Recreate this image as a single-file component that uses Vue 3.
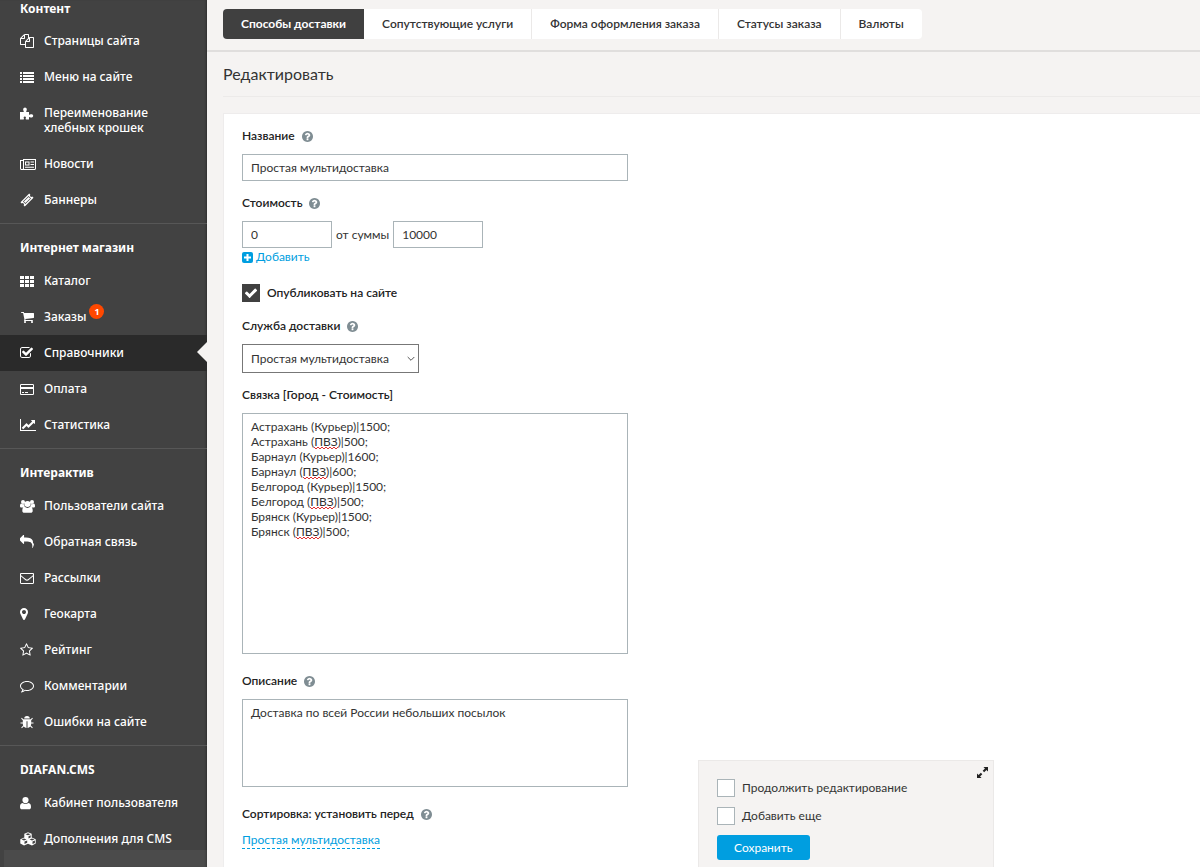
<script setup>
import { ref, computed, onMounted } from 'vue'

const check = 'M1671 566q0 40-28 68l-724 724-136 136q-28 28-68 28t-68-28l-136-136-362-362q-28-28-28-68t28-68l136-136q28-28 68-28t68 28l294 295 656-657q28-28 68-28t68 28l136 136q28 28 28 68z'
const help = 'M1024 1376v-192q0-14-9-23t-23-9h-192q-14 0-23 9t-9 23v192q0 14 9 23t23 9h192q14 0 23-9t9-23zm256-672q0-88-55.5-163t-138.5-116-170-41q-243 0-371 213-15 24 8 42l132 100q7 6 19 6 16 0 25-12 53-68 86-92 34-24 86-24 48 0 85.500 26t37.500 59q0 38-20 61t-68 45q-63 28-115.500 86.500t-52.500 125.500v36q0 14 9 23t23 9h192q14 0 23-9t9-23q0-19 21.500-49.500t54.500-49.500q32-18 49-28.500t46-35 44.500-48 28-60.500 12.500-81zm384 192q0 209-103 385.500t-279.500 279.500-385.500 103-385.500-103-279.500-279.500-103-385.500 103-385.500 279.500-279.500 385.500-103 385.500 103 279.500 279.500 103 385.500z'

const icons = {
  files: { box: '0 0 1792 1792', d: 'M1696 384q40 0 68 28t28 68v1216q0 40-28 68t-68 28h-960q-40 0-68-28t-28-68v-288h-544q-40 0-68-28t-28-68v-672q0-40 20-88t48-76l408-408q28-28 76-48t88-20h416q40 0 68 28t28 68v328q68-40 128-40h416zm-544 213l-299 299h299v-299zm-640-384l-299 299h299v-299zm196 647l316-316v-416h-384v416q0 40-28 68t-68 28h-416v640h512v-256q0-40 20-88t48-76zm956 804v-1152h-384v416q0 40-28 68t-68 28h-416v640h896z' },
  list: { box: '0 0 14 14', d: 'M0 2h2v2H0zM3 2h11v2H3zM0 5h2v2H0zM3 5h11v2H3zM0 8h2v2H0zM3 8h11v2H3zM0 11h2v2H0zM3 11h11v2H3z' },
  puzzle: { box: '0 0 14 14', d: 'M0 6h3.200c.6 0 .8-.4.4-1C2.800 3.800 3 1.500 5 1.500S7.200 3.800 6.400 5c-.4.6-.2 1 .4 1H9v2.200c0 .6.400.8 1 .4 1.200-.8 3.200-.6 3.200 1.200S11.200 12 10 11.200c-.6-.4-1-.2-1 .4V13.500H6.200c-.6 0-.8-.4-.5-.9.5-1 .3-2-.9-2s-1.400 1-.9 2c.3.500.1.900-.5.900H0z' },
  news: { box: '0 0 16 14', d: 'M3 2h13v9.500c0 .8-.7 1.500-1.500 1.500h-13C.7 13 0 12.300 0 11.500V3h3zM4 3v8.500c0 .2 0 .3-.1.500H14.500c.3 0 .5-.2.500-.5V3zM3 4H1v7.500c0 .3.200.5.500.5H2.500c.3 0 .5-.2.500-.5zM5 4.500h4.500v4H5zM6 5.500v2h2.500v-2zM10.500 4.500H14v1h-3.500zM10.500 7H14v1h-3.500zM5 9.800h9v1H5z' },
  ticket: { box: '0 0 14 14', d: 'M9.200.500 10.400 1.700a1.300 1.300 0 0 0 1.900 1.900L13.500 4.800 4.800 13.500 3.600 12.300a1.300 1.300 0 0 0-1.900-1.900L.5 9.200zM8.600 3 3 8.600 5.400 11 11 5.400zM8.600 3.900 10.100 5.400 5.400 10.100 3.900 8.600z' },
  grid: { box: '0 0 14 14', d: 'M0 2h4v3H0zM5 2h4v3H5zM10 2h4v3h-4zM0 6h4v3H0zM5 6h4v3H5zM10 6h4v3h-4zM0 10h4v3H0zM5 10h4v3H5zM10 10h4v3h-4z' },
  cart: { box: '-64 0 1792 1792', d: 'M704 1536q0 52-38 90t-90 38-90-38-38-90 38-90 90-38 90 38 38 90zm896 0q0 52-38 90t-90 38-90-38-38-90 38-90 90-38 90 38 38 90zm128-1088v512q0 24-16.500 42.500t-40.500 21.500l-1044 122q13 60 13 70 0 16-24 64h920q26 0 45 19t19 45-19 45-45 19h-1024q-26 0-45-19t-19-45q0-11 8-31.500t16-36 21.500-40 15.500-29.500l-177-823h-204q-26 0-45-19t-19-45 19-45 45-19h256q16 0 28.500 6.500t19.500 15.500 13 24.500 8 26 5.500 29.500 4.500 26h1201q26 0 45 19t19 45z' },
  tick: { box: '64 0 1792 1792', d: 'M1472 930v318q0 119-84.500 203.500t-203.500 84.500h-832q-119 0-203.500-84.500t-84.500-203.500v-832q0-119 84.500-203.500t203.500-84.500h832q63 0 117 25 15 7 18 23 3 17-9 29l-49 49q-10 10-23 10-3 0-9-2-23-6-45-6h-832q-66 0-113 47t-47 113v832q0 66 47 113t113 47h832q66 0 113-47t47-113v-254q0-13 9-22l64-64q10-10 23-10 6 0 12 3 20 8 20 29zm231-489l-814 814q-24 24-57 24t-57-24l-430-430q-24-24-24-57t24-57l110-110q24-24 57-24t57 24l263 263 647-647q24-24 57-24t57 24l110 110q24 24 24 57t-24 57z' },
  card: { box: '0 0 14 14', d: 'M1.300 2h11.400c.7 0 1.300.6 1.300 1.300v8.400c0 .7-.6 1.300-1.300 1.300H1.300C.6 13 0 12.400 0 11.700V3.300C0 2.600.6 2 1.300 2zM1 5h12V3.300c0-.2-.1-.3-.3-.3H1.300c-.2 0-.3.100-.3.300zM1 7v4.700c0 .2.100.3.300.3h11.400c.2 0 .3-.1.300-.3V7zM2 10h2v1H2zM5 10h3v1H5z' },
  chart: { box: '0 0 2048 1792', d: 'M2048 1536v128h-2048v-1536h128v1408h1920zm-128-1248v435q0 21-19.500 29.500t-35.500-7.500l-121-121-633 633q-10 10-23 10t-23-10l-233-233-416 416-192-192 585-585q10-10 23-10t23 10l233 233 464-464-121-121q-16-16-7.500-35.500t29.500-19.500h435q14 0 23 9t9 23z' },
  users: { box: '0 0 15 14', d: 'M3 .900a2 2 0 1 1 0 4 2 2 0 0 1 0-4zM12 .900a2 2 0 1 1 0 4 2 2 0 0 1 0-4zM7.500 2a3 3 0 1 1 0 6 3 3 0 0 1 0-6zM1 4.500c1 .8 2.300.9 3.200.5-.1 1.200.2 2 .8 2.800-.8 0-1.500.2-2 .700H1.500C.6 8.500 0 8 0 7.200 0 6 .2 4.900 1 4.500zM14 4.500c-1 .8-2.300.9-3.200.5.1 1.200-.2 2-.8 2.800.8 0 1.500.2 2 .700h1.500c.9 0 1.500-.5 1.500-1.300C15 6 14.800 4.900 14 4.500zM4.600 7.800c1.800 1.500 4 1.500 5.800 0 1.800.2 2.300 1.900 2.300 3.900 0 1.300-.8 2.100-2 2.100H4.300c-1.200 0-2-.8-2-2.100 0-2 .5-3.700 2.300-3.900z' },
  reply: { box: '0 0 1792 1792', d: 'M1792 1120q0 166-127 451-3 7-10.500 24t-13.500 30-13 22q-12 17-28 17-15 0-23.500-10t-8.500-25q0-9 2.500-26.500t2.500-23.500q5-68 5-123 0-112-19.500-200.500t-54-153.500-89-112-117.500-79.500-154-53.500-184-29.500-215-8.500h-224v256q0 26-19 45t-45 19-45-19l-512-512q-19-19-19-45t19-45l512-512q19-19 45-19t45 19 19 45v256h224q713 0 875 403 53 134 53 333z' },
  mail: { box: '0 0 14 14', d: 'M1.200 2h11.600C13.500 2 14 2.500 14 3.200v8.600c0 .7-.5 1.200-1.200 1.200H1.200C.5 13 0 12.500 0 11.800V3.200C0 2.500.5 2 1.200 2zM1 5.500v6.300c0 .1.100.2.200.2h11.600c.1 0 .2-.1.200-.2V5.500c-1.300 1.100-2.600 2.100-3.900 3.200C8.500 9.200 7.800 9.700 7 9.700s-1.500-.5-2.100-1C3.600 7.600 2.300 6.600 1 5.500zM1 3.200C1 4.100 1.500 4.700 2.200 5.300l3.200 2.500c.5.400 1 .9 1.600.9s1.100-.5 1.600-.9l3.200-2.500c.7-.6 1.200-1.200 1.200-2.100 0-.1-.1-.2-.2-.2H1.200c-.1 0-.2.100-.2.200z' },
  pin: { box: '384 0 1792 1792', d: 'M1152 640q0-106-75-181t-181-75-181 75-75 181 75 181 181 75 181-75 75-181zm256 0q0 109-33 179l-364 774q-16 33-47.500 52t-67.500 19-67.500-19-46.500-52l-365-774q-33-70-33-179 0-212 150-362t362-150 362 150 150 362z' },
  star: { box: '64 0 1792 1792', d: 'M1201 1004l306-297-422-62-189-382-189 382-422 62 306 297-73 421 378-199 377 199zm527-357q0 22-26 48l-363 354 86 500q1 7 1 20 0 50-41 50-19 0-40-12l-449-236-449 236q-22 12-40 12-21 0-31.500-14.500t-10.500-35.500q0-6 2-20l86-500-364-354q-25-27-25-48 0-37 56-46l502-73 225-455q19-41 49-41t49 41l225 455 502 73q56 9 56 46z' },
  comment: { box: '0 0 14 14', d: 'M7 2c3.900 0 7 2.200 7 5s-3.100 5-7 5c-.6 0-1.200-.1-1.800-.200-1 .9-2.200 1.400-3.600 1.600-.5.1-.7-.4-.4-.7.6-.6 1-1.200 1.200-2C1 9.800 0 8.500 0 7c0-2.800 3.100-5 7-5zm0 1C3.700 3 1 4.800 1 7c0 1.200.8 2.300 2.100 3l.600.300c-.1.600-.3 1.100-.5 1.500.6-.2 1.200-.6 1.700-1.100.7.200 1.400.3 2.100.3 3.300 0 6-1.800 6-4S10.300 3 7 3z' },
  bug: { box: '0 0 14 14', d: 'M4.200 3.500a2.800 2.500 0 0 1 5.600 0zM3.300 4.300h7.400l1.500-1.500.7.700L11.200 5.200v2.200h2.300v1h-2.300c0 .8-.2 1.500-.4 2.100l2 2-.7.700-1.800-1.800c-.8.900-1.800 1.400-2.800 1.500V6.200h-1v6.700c-1-.1-2-.6-2.800-1.500l-1.800 1.800-.7-.7 2-2c-.2-.6-.4-1.300-.4-2.100H.5v-1h2.300V5.200L1.100 3.500l.7-.7z' },
  user: { box: '0 0 14 14', d: 'M5.500 1a3.100 3.100 0 1 1 0 6.200 3.100 3.100 0 0 1 0-6.200zM2.600 7c1.800 1.400 4 1.400 5.800 0C10.400 7.200 11 9 11 11c0 1.400-.8 2.300-2 2.300H2c-1.200 0-2-.9-2-2.300 0-2 .6-3.800 2.600-4z' },
  cubes: { box: '0 0 16 14', d: 'M8 .300 11.700 1.800v3.700l4 1.700v4.300L12 13.500 8 11.700 4 13.500.3 11.500V7.200l4-1.700V1.800zM8 1.300 5.500 2.300 8 3.300 10.500 2.300zM8.500 4.300v2.300l2.200-1V3.300zM4 6.500 1.500 7.600 4 8.600 6.500 7.600zM12 6.500 9.500 7.600 12 8.600 14.500 7.600zM4.500 9.600v2.500L7.200 10.800V8.400zM12.500 9.600v2.500L14.900 10.900V8.500z' }
}

const groups = [
  { title: 'Контент', items: [['files', 'Страницы сайта'], ['list', 'Меню на сайте'], ['puzzle', 'Переименование хлебных крошек'], ['news', 'Новости'], ['ticket', 'Баннеры']] },
  { title: 'Интернет магазин', items: [['grid', 'Каталог'], ['cart', 'Заказы', 1], ['tick', 'Справочники'], ['card', 'Оплата'], ['chart', 'Статистика']] },
  { title: 'Интерактив', items: [['users', 'Пользователи сайта'], ['reply', 'Обратная связь'], ['mail', 'Рассылки'], ['pin', 'Геокарта'], ['star', 'Рейтинг'], ['comment', 'Комментарии'], ['bug', 'Ошибки на сайте']] },
  { title: 'DIAFAN.CMS', items: [['user', 'Кабинет пользователя'], ['cubes', 'Дополнения для CMS']] }
]
const active = 'Справочники'
const tabs = ['Способы доставки', 'Сопутствующие услуги', 'Форма оформления заказа', 'Статусы заказа', 'Валюты']

const name = ref('Простая мультидоставка')
const price = ref('0')
const from = ref('10000')
const published = ref(true)
const service = ref('Простая мультидоставка')
const cities = ref('Астрахань (Курьер)|1500;\nАстрахань (ПВЗ)|500;\nБарнаул (Курьер)|1600;\nБарнаул (ПВЗ)|600;\nБелгород (Курьер)|1500;\nБелгород (ПВЗ)|500;\nБрянск (Курьер)|1500;\nБрянск (ПВЗ)|500;')
const about = ref('Доставка по всей России небольших посылок')
const keepEditing = ref(false)
const addMore = ref(false)

const area = ref(null)
const pen = ref(null)
onMounted(() => {
  const ctx = document.createElement('canvas').getContext('2d')
  ctx.font = getComputedStyle(area.value).font
  pen.value = ctx
})
const waves = computed(() => {
  if (!pen.value) return []
  const size = t => pen.value.measureText(t).width
  return cities.value.split('\n').flatMap((row, i) => {
    const at = row.indexOf('ПВЗ')
    if (at < 0) return []
    const x = Math.round(9 + size(row.slice(0, at)))
    const y = 6 + i * 15 + 13
    const n = Math.round(size('ПВЗ') / 4)
    return [`M${x} ${y}` + 'l2 2 2-2'.repeat(n)]
  })
})
</script>

<template>
  <div class="page">
    <aside class="side">
      <nav v-for="g in groups" :key="g.title" class="group">
        <h2>{{ g.title }}</h2>
        <a v-for="[icon, text, badge] in g.items" :key="text" href="#" class="item" :class="{ active: text === active }">
          <svg class="ico" :viewBox="icons[icon].box" preserveAspectRatio="xMinYMid meet"><path fill-rule="evenodd" :d="icons[icon].d" /></svg>
          <span class="txt">{{ text }}<b v-if="badge" class="badge">{{ badge }}</b></span>
        </a>
      </nav>
    </aside>

    <main class="main">
      <header class="top">
        <nav class="tabs">
          <a v-for="(t, i) in tabs" :key="t" href="#" class="tab" :class="{ on: i === 0 }">{{ t }}</a>
        </nav>
      </header>
      <h1>Редактировать</h1>

      <form class="card" @submit.prevent>
        <div class="field">
          <label class="lbl" for="name">Название <svg class="help" viewBox="128 128 1536 1536"><path :d="help" /></svg></label>
          <input id="name" v-model="name" class="box" type="text" />
        </div>

        <div class="field wide">
          <label class="lbl" for="price">Стоимость <svg class="help" viewBox="128 128 1536 1536"><path :d="help" /></svg></label>
          <div class="line">
            <input id="price" v-model="price" class="box short" type="text" />
            <label for="from">от суммы</label>
            <input id="from" v-model="from" class="box short" type="text" />
          </div>
          <a href="#" class="add"><svg viewBox="0 0 11 11"><rect width="11" height="11" rx="2" /><path d="M5.500 2v7M2 5.500h7" /></svg>Добавить</a>
        </div>

        <label class="tickrow strong">
          <span class="tickbox"><input v-model="published" type="checkbox" /><svg viewBox="0 0 1792 1792"><path :d="check" /></svg></span>
          Опубликовать на сайте
        </label>

        <div class="field">
          <label class="lbl" for="service">Служба доставки <svg class="help" viewBox="128 128 1536 1536"><path :d="help" /></svg></label>
          <div class="pick">
            <select id="service" v-model="service"><option>Простая мультидоставка</option></select>
            <svg viewBox="0 0 8 6"><path d="M.700 1 4 4.300 7.300 1" /></svg>
          </div>
        </div>

        <div class="field wide">
          <label class="lbl" for="cities">Связка [Город - Стоимость]</label>
          <div class="spell">
            <textarea id="cities" ref="area" v-model="cities" class="box cities" spellcheck="false"></textarea>
            <svg class="waves" aria-hidden="true"><path v-for="w in waves" :key="w" :d="w" /></svg>
          </div>
        </div>

        <div class="field wide">
          <label class="lbl" for="about">Описание <svg class="help" viewBox="128 128 1536 1536"><path :d="help" /></svg></label>
          <textarea id="about" v-model="about" class="box about" spellcheck="false"></textarea>
        </div>

        <div class="field">
          <p class="lbl">Сортировка: установить перед <svg class="help" viewBox="128 128 1536 1536"><path :d="help" /></svg></p>
          <a href="#" class="sort">Простая мультидоставка</a>
        </div>
      </form>
    </main>

    <section class="save">
      <svg class="expand" viewBox="0 0 12 12"><path d="M7 0h5v5L10.300 3.300 7.800 5.800 6.200 4.200 8.700 1.700zM5 12H0V7l1.700 1.700L4.200 6.200 5.800 7.800 3.300 10.300z" /></svg>
      <label class="tickrow"><span class="tickbox"><input v-model="keepEditing" type="checkbox" /><svg viewBox="0 0 1792 1792"><path :d="check" /></svg></span>Продолжить редактирование</label>
      <label class="tickrow"><span class="tickbox"><input v-model="addMore" type="checkbox" /><svg viewBox="0 0 1792 1792"><path :d="check" /></svg></span>Добавить еще</label>
      <button type="button">Сохранить</button>
    </section>
    <div class="status"></div>
  </div>
</template>

<style>
body { background: #f5f3f2; }
</style>

<style scoped>
* { box-sizing: border-box; }
.page { display: flex; height: 100vh; overflow: hidden; font: 12px/16px Lato, "Noto Sans", sans-serif; color: #333; }
a { color: inherit; text-decoration: none; }
input, textarea, select, button { font: inherit; color: inherit; margin: 0; border-radius: 0; }

.side { flex: 0 0 207px; background: #424242; color: #fff; box-shadow: inset -2px 0 2px -1px #303030; font-family: "Noto Sans", sans-serif; }
.group { padding: 16px 0 5px; border-top: 1px solid #575757; }
.group:first-child { padding-top: 1px; border-top: 0; }
.group h2 { margin: 0; padding: 0 20px 7px; font-size: 12px; line-height: 16px; font-weight: 700; }
.group:first-child h2 { padding-bottom: 6px; }
.item { position: relative; display: flex; align-items: flex-start; gap: 8px; padding: 10px 10px 11px 20px; line-height: 15px; font-weight: 500; }
.ico { flex: 0 0 16px; width: 16px; height: 14px; margin-top: 1px; fill: #fff; }
.item.active { background: #2a2a2a; }
.item.active::after { content: ""; position: absolute; right: 0; top: 7px; border: 10px solid transparent; border-left: 0; border-right-color: #f5f3f2; }
.badge { display: inline-block; width: 15px; height: 15px; margin: -6px 0 0 3px; border-radius: 50%; background: #ff4800; font-size: 9px; line-height: 15px; text-align: center; vertical-align: 6px; }

.main { flex: 1; min-width: 0; }
.top { padding: 9px 16px 11px; border-bottom: 2px solid #e0dedd; }
.tabs { display: inline-flex; vertical-align: top; border-radius: 4px; overflow: hidden; background: #fff; }
.tab { padding: 0 18px; line-height: 30px; font-weight: 600; border-left: 1px solid #ebe9e8; }
.tab.on { background: #404040; color: #fff; font-weight: 700; border-left: 0; }
.tab.on + .tab { border-left: 0; }
h1 { margin: 0 0 16px 16px; padding: 11px 0 12px; border-bottom: 1px solid #eceae9; font-size: 16px; line-height: 21px; font-weight: 400; }
.card { margin-left: 16px; padding: 14px 18px; min-height: 760px; background: #fff; border: 1px solid #eeecec; border-right: 0; }
.field { margin-bottom: 14px; }
.field.wide { margin-bottom: 19px; }
.lbl { display: flex; align-items: center; gap: 7px; margin: 0 0 10px; font-weight: 600; color: #222; }
.help { width: 11px; height: 11px; fill: #7f8d93; }
.box { display: block; width: 386px; max-width: 100%; height: 27px; padding: 0 8px; border: 1px solid #aab4b8; background: #fff; }
.line { display: flex; align-items: center; gap: 4px; }
.short { width: 90px; }
.add { display: inline-flex; align-items: center; gap: 3px; color: #009ee0; vertical-align: top; margin-top: 1px; }
.add svg { width: 11px; height: 11px; fill: #009ee0; stroke: #fff; stroke-width: 2; }
.add rect { stroke: none; }
.tickrow { display: flex; align-items: center; gap: 7px; }
.strong { font-weight: 600; margin-bottom: 16px; color: #222; }
.tickbox { display: grid; width: 18px; height: 18px; }
.tickbox > * { grid-area: 1 / 1; }
.tickbox input { appearance: none; width: 18px; height: 18px; border: 1px solid #aab4b8; background: #fff; }
.tickbox input:checked { background: #404040; border-color: #404040; }
.tickbox svg { place-self: center; width: 14px; height: 14px; fill: #fff; pointer-events: none; }
.pick { display: inline-grid; width: 177px; vertical-align: top; }
.pick > * { grid-area: 1 / 1; }
.pick select { appearance: none; height: 29px; padding: 0 8px; border: 1px solid #777; background: #fff; }
.pick svg { place-self: center end; width: 8px; height: 6px; margin-right: 4px; fill: none; stroke: #555; pointer-events: none; }
.spell { display: grid; width: 386px; max-width: 100%; }
.spell > * { grid-area: 1 / 1; }
textarea.box { padding: 5px 8px; line-height: 15px; resize: none; overflow: hidden; }
.box.cities { height: 241px; }
.waves { width: 100%; height: 100%; fill: none; stroke: #e03030; pointer-events: none; }
.about.box { height: 88px; }
.sort { display: inline-block; color: #009ee0; border-bottom: 1px dashed #009ee0; }

.save { position: fixed; left: 698px; bottom: 0; width: 296px; padding: 18px 18px 7px; background: #f5f3f2; border: 1px solid #ebe9e8; border-bottom: 0; }
.save .tickrow { margin-bottom: 10px; }
.save .expand { position: absolute; top: 6px; right: 5px; width: 11px; height: 11px; fill: #222; }
.save button { display: block; height: 25px; padding: 0 17px; border: 0; border-radius: 3px; background: #009ee0; color: #fff; }
.status { position: fixed; left: 4px; bottom: 0; width: 268px; height: 17px; background: #fff; opacity: 0.05; pointer-events: none; }
</style>
